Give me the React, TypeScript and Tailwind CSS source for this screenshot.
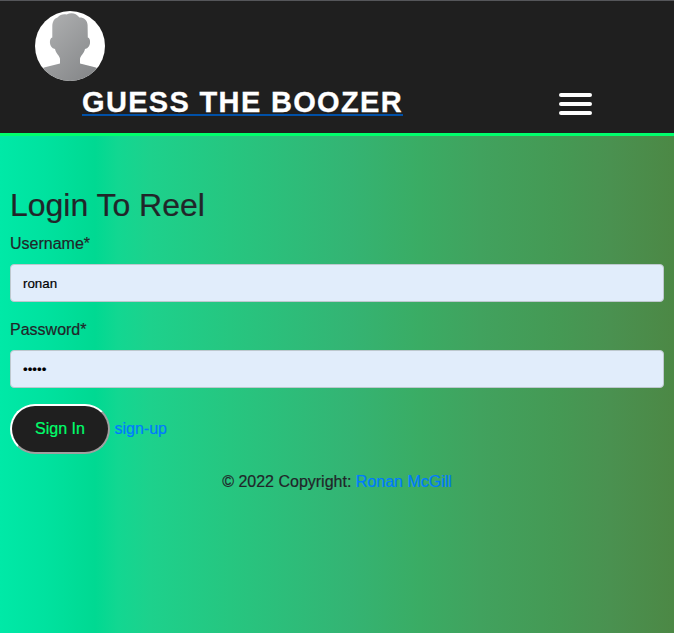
import React from "react";

function Avatar() {
  return (
    <svg viewBox="0 0 70 70" className="ml-[35px] block h-[70px] w-[70px]" role="img" aria-label="Profile">
      <defs>
        <linearGradient id="silhouette" x1="0" y1="0" x2="1" y2="1">
          <stop offset="0" stopColor="#b4b5b6" />
          <stop offset="1" stopColor="#7f8183" />
        </linearGradient>
        <clipPath id="disc">
          <circle cx="35" cy="35" r="35" />
        </clipPath>
      </defs>
      <g clipPath="url(#disc)">
        <rect width="70" height="70" fill="#fff" />
        <path
          fill="url(#silhouette)"
          d="M17.3 26.5 L17.3 15 C17.5 10 19.5 7.5 22.5 6.5 C25 3.8 28 2.8 31.5 3.5 C36 1.2 41 1.8 44.5 6.5 C49 6.5 52.3 9 52.6 14 L52.8 26.5 C56 27 56.5 37 50 38 C49 43 45 45 45 48 L45 52.5 L60 56.3 L70 60 L70 70 L0 70 L0 60 L10 56.3 L25 52.5 L25 48 C25 45 21 43 20 38 C13.5 37 14 27 17.3 26.5 Z"
        />
      </g>
    </svg>
  );
}

function Header() {
  return (
    <header className="h-[136px] border-t border-b-[3px] border-t-[#55565a] border-b-[#00ff6c] bg-[#1f1f1f] pt-[10px]">
      <Avatar />
      <div className="flex justify-between pr-[82px] pl-[82px]">
        <a href="#" className="mt-[6px] flex h-[29px] w-[321px] border-b-2 border-[#0050a8] text-[29px] leading-[31px] font-bold tracking-[1.33px] whitespace-nowrap text-white [-webkit-text-stroke:0.3px]">
          GUESS THE BOOZER
        </a>
        <button aria-label="Menu" className="mt-[12px] flex w-[33px] flex-col gap-[5px]">
          <span className="h-1 w-full rounded-full bg-white" />
          <span className="h-1 w-full rounded-full bg-white" />
          <span className="h-1 w-full rounded-full bg-white" />
        </button>
      </div>
    </header>
  );
}

function Field({ label, type, value }: { label: string; type: string; value: string }) {
  return (
    <div className="mb-4">
      <label className="mb-2 block h-6 leading-6">{label}*</label>
      <input
        type={type}
        defaultValue={value}
        className="block h-[38px] w-full rounded border border-[#bdc8ce] bg-[#e1edfb] px-3 text-[13.33px] text-black outline-none"
      />
    </div>
  );
}

export default function App() {
  return (
    <div className="min-h-[633px] bg-[linear-gradient(90deg,#00e9a7_0px,#00e29f_45px,#00d992_95px,#12d791_118px,#1dd18c_150px,#26c680_230px,#34b473_350px,#3aac64_420px,#41a25e_480px,#459954_560px,#4a9150_610px,#4c8845_674px)] font-['Liberation_Sans',Arial,sans-serif] text-base text-[#212529] [-webkit-text-stroke:0.2px]">
      <Header />
      <main className="px-[10px] pt-[50px]">
        <h1 className="mb-2 h-[38px] text-[32px] leading-[38px] tracking-[-0.02px]">Login To Reel</h1>
        <form>
          <Field label="Username" type="text" value="ronan" />
          <Field label="Password" type="password" value="12345" />
          <div className="flex items-center gap-[4.5px]">
            <button
              type="button"
              className="h-[50px] w-[100px] rounded-[25px] border-2 border-t-white border-r-[#a0a0a0] border-b-[#a0a0a0] border-l-white bg-[#1f1f1f] text-[#00ff6c]"
            >
              Sign In
            </button>
            <a href="#" className="text-[#007bff]">sign-up</a>
          </div>
        </form>
      </main>
      <footer className="mt-4 text-center leading-6">
        © 2022 Copyright: <a href="#" className="text-[#007bff]">Ronan McGill</a>
      </footer>
    </div>
  );
}
